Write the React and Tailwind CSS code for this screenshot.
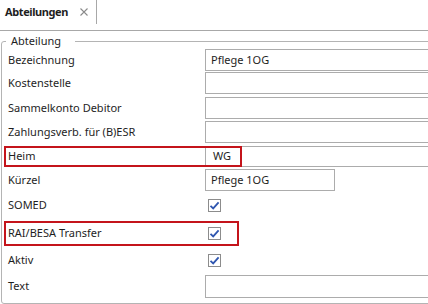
import React from 'react';

const font = { fontFamily: '"Noto Sans", "Open Sans", sans-serif' };

function Check() {
  return (
    <div className="w-[13px] h-[13px] border border-[#8c8c8c] bg-white flex items-center justify-center">
      <svg width="11" height="11" viewBox="0 0 11 11">
        <path d="M1.5 5.8 L4.2 8.4 L9.6 2.4" fill="none" stroke="#2f56b0" strokeWidth="1.8" />
      </svg>
    </div>
  );
}

function Row({ label, mt, h, children, marked, markH, markW }) {
  return (
    <div className={`relative flex items-center ${mt} ${h}`}>
      {marked && (
        <div className={`absolute left-[-4px] top-0 ${markW} ${markH} border-2 border-[#c4141b] pointer-events-none z-10`} />
      )}
      <div className="w-[197px] shrink-0 text-[11px] text-[#1e1e1e]">{label}</div>
      <div className="flex-1 flex items-center h-full">{children}</div>
    </div>
  );
}

function Input({ value, w = 'w-full', h = 'h-full', pl = 'pl-[5px]' }) {
  return (
    <div className={`${w} ${h} border border-[#acacac] bg-white flex items-center ${pl} text-[11px] text-[#1e1e1e]`}>
      {value}
    </div>
  );
}

export default function App() {
  return (
    <div className="w-[428px] h-[304px] overflow-hidden bg-white" style={font}>
      <div className="h-[31px] border-b border-[#a8a8a8] flex items-start">
        <div className="w-[97px] h-[24px] border-r border-[#a8a8a8] flex items-center pl-[5px]">
          <span className="text-[11px] font-bold tracking-[-0.4px] text-[#1e1e1e]">Abteilungen</span>
          <svg className="ml-[12px]" width="8" height="8" viewBox="0 0 8 8">
            <path d="M0.5 0.5 L7.5 7.5 M7.5 0.5 L0.5 7.5" stroke="#8a8a8a" strokeWidth="1.1" />
          </svg>
        </div>
      </div>
      <fieldset className="mt-[2px] ml-[1px] w-[470px] border border-[#b4b4b4] rounded-[3px] pl-[6px] pb-[5px] pt-0 m-0">
        <legend className="ml-[-2px] pl-[5px] pr-[14px] text-[11px] leading-[16px] text-[#1e1e1e]">Abteilung</legend>
        <div className="flex flex-col">
          <Row label="Bezeichnung" mt="mt-0" h="h-[22px]">
            <Input value="Pflege 1OG" />
          </Row>
          <Row label="Kostenstelle" mt="mt-[1px]" h="h-[22px]">
            <Input />
          </Row>
          <Row label="Sammelkonto Debitor" mt="mt-[3px]" h="h-[22px]">
            <Input />
          </Row>
          <Row label="Zahlungsverb. für (B)ESR" mt="mt-[2px]" h="h-[22px]">
            <Input />
          </Row>
          <Row label="Heim" mt="mt-[3px]" h="h-[21px]" marked markW="w-[238px]" markH="h-[21px]">
            <Input value="WG" pl="pl-[7px]" />
          </Row>
          <Row label="Kürzel" mt="mt-[2px]" h="h-[22px]">
            <Input value="Pflege 1OG" w="w-[130px]" />
          </Row>
          <Row label="SOMED" mt="mt-[3px]" h="h-[22px]">
            <div className="pl-[3px]"><Check /></div>
          </Row>
          <Row label="RAI/BESA Transfer" mt="mt-[5px]" h="h-[24px]" marked markW="w-[235px]" markH="h-[25px]">
            <div className="pl-[3px]"><Check /></div>
          </Row>
          <Row label="Aktiv" mt="mt-[4px]" h="h-[22px]">
            <div className="pl-[3px]"><Check /></div>
          </Row>
          <Row label="Text" mt="mt-[4px]" h="h-[23px]">
            <Input />
          </Row>
        </div>
      </fieldset>
    </div>
  );
}
